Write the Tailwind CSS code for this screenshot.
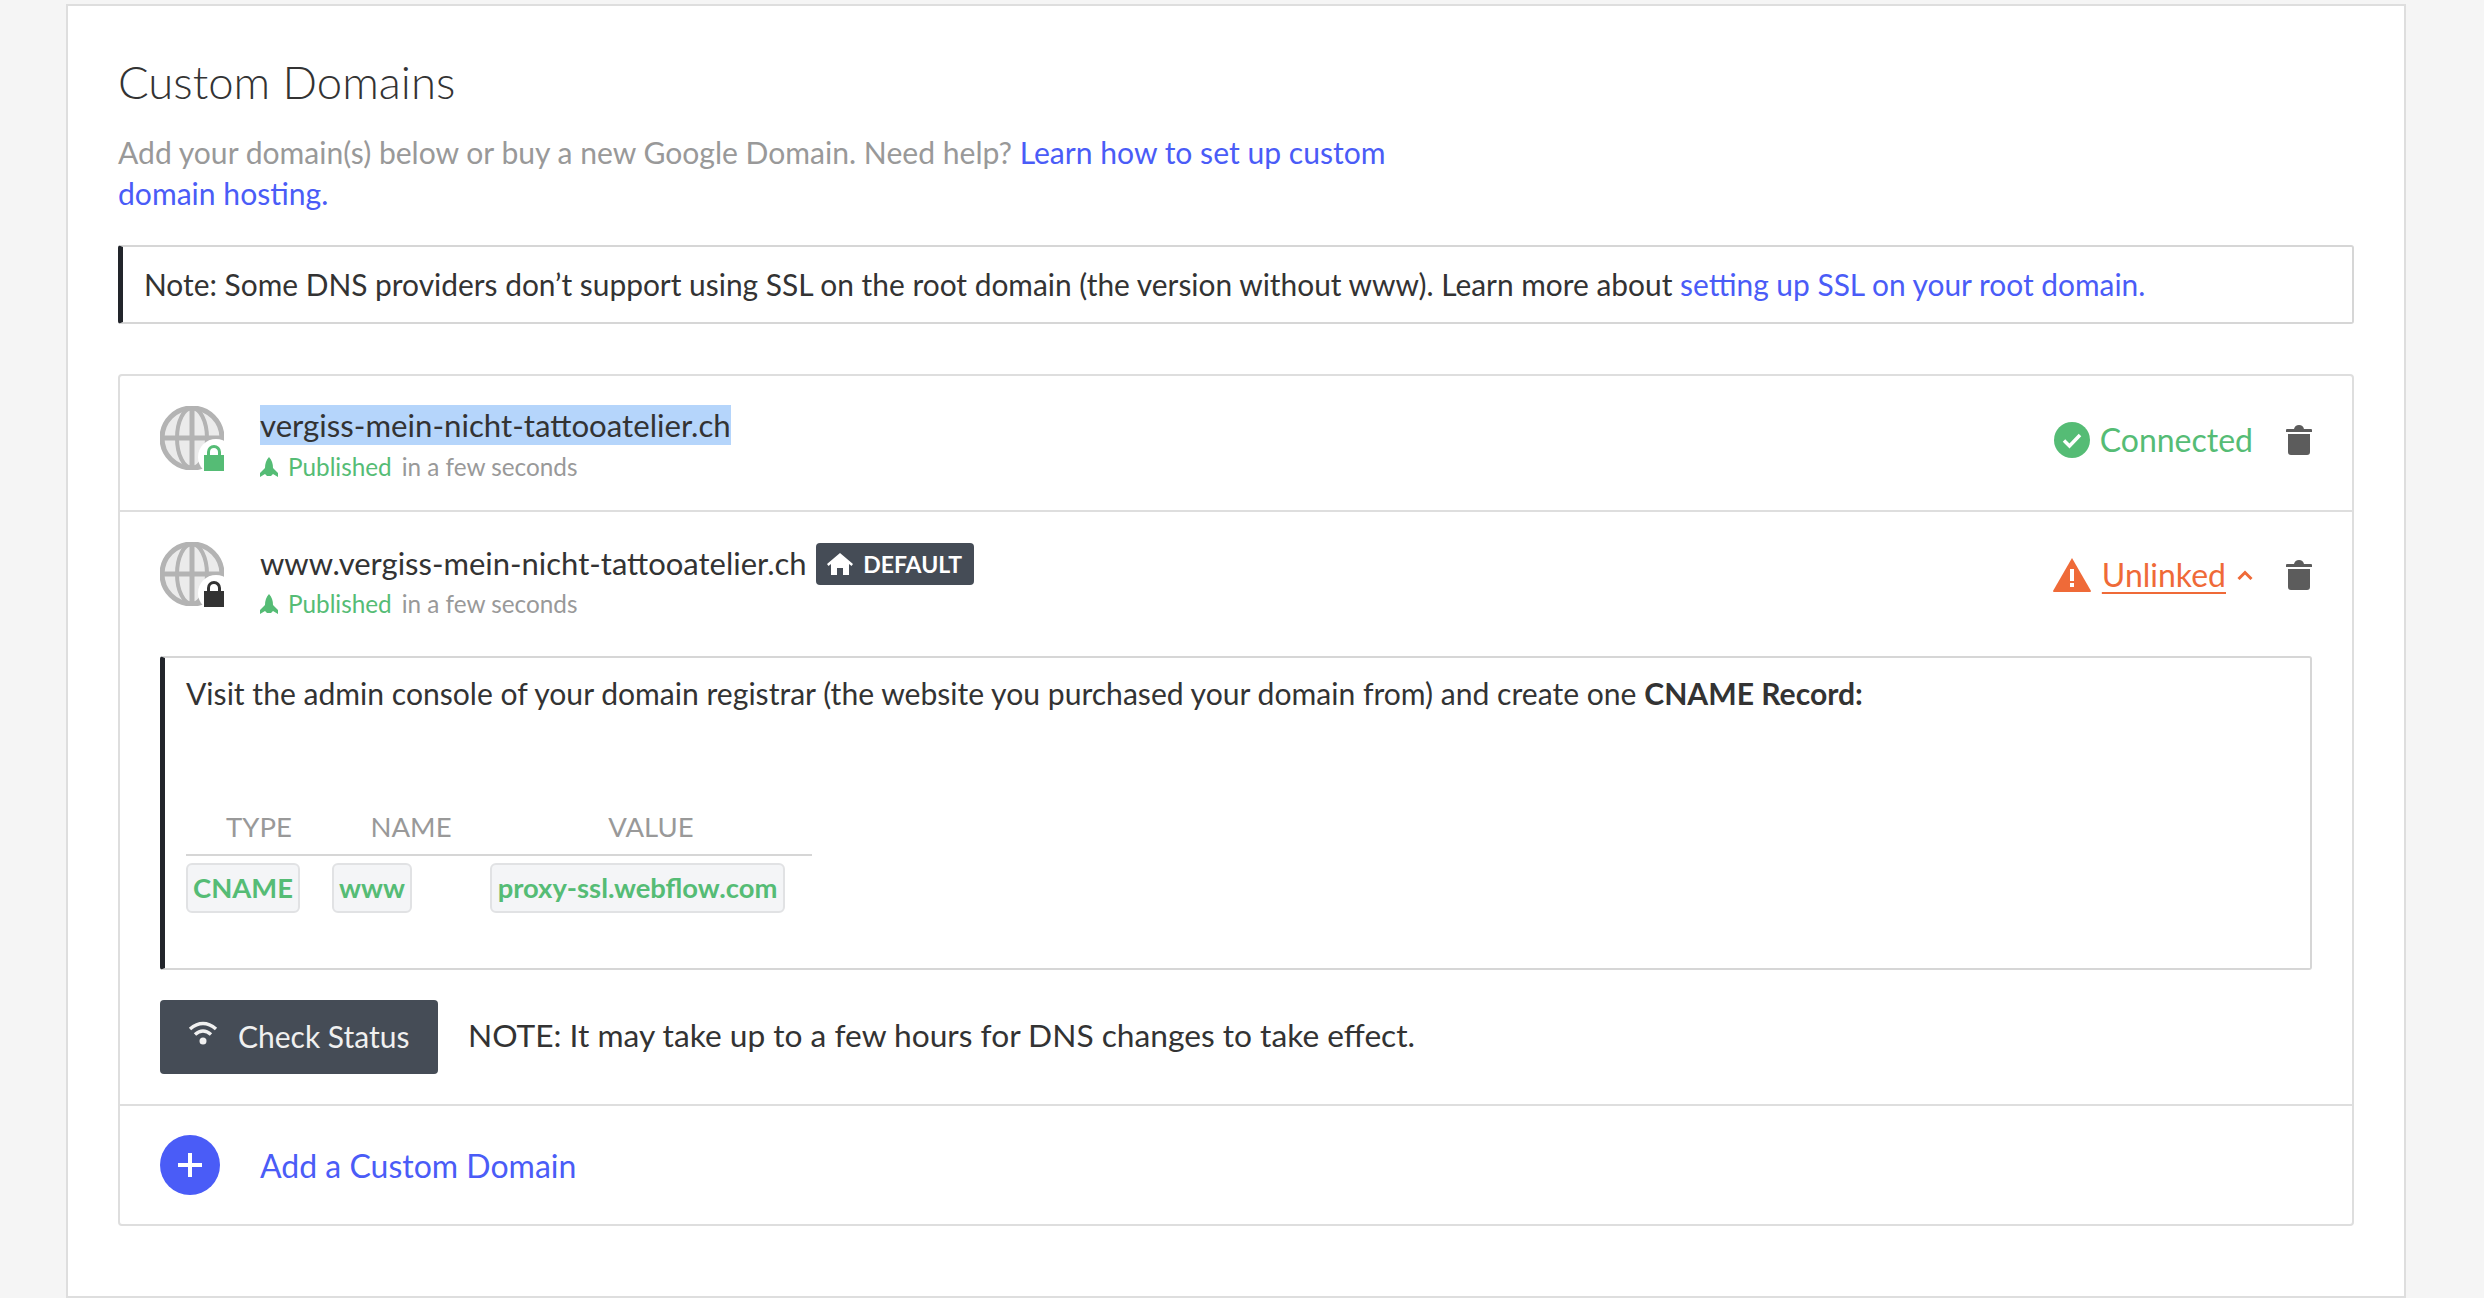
<!DOCTYPE html>
<html lang="en">
<head>
<meta charset="UTF-8" />
<title>Custom Domains</title>
<script src="https://cdn.jsdelivr.net/npm/@tailwindcss/browser@4"></script>
</head>
<body class="bg-[#f5f5f5] font-['Lato',sans-serif] text-[#333] overflow-hidden">
<div class="h-[1298px] pt-[4px]">
  <div class="ml-[66px] w-[2340px] h-[1294px] bg-white border-2 border-[#dedede] px-[50px]">
    <!-- heading -->
    <h1 class="pt-[48px] text-[45.5px] leading-[56px] font-light text-[#333]">Custom Domains</h1>
    <p class="mt-[22px] w-[1340px] text-[30.1px] leading-[41px] text-[#999]">Add your domain(s) below or buy a new Google Domain. Need help? <a class="text-[#4a5cf7]">Learn how to set up custom domain hosting.</a></p>

    <!-- ssl note -->
    <div class="mt-[31px] h-[79px] flex items-center border-2 border-l-[5px] border-[#d6d6d6] border-l-[#22252b] rounded-[3px] pl-[21px] text-[29.9px]">
      <span>Note: Some DNS providers don’t support using SSL on the root domain (the version without www). Learn more about <a class="text-[#4a5cf7]">setting up SSL on your root domain.</a></span>
    </div>

    <!-- domain list -->
    <div class="mt-[50px] border-2 border-[#dedede] rounded-[4px]">
      <!-- apex domain -->
      <div class="h-[136px] flex items-start px-[40px] border-b-2 border-[#dedede]">
        <div class="relative mt-[30px] w-[64px] h-[64px]">
          <svg viewBox="0 0 64 64" class="w-[64px] h-[64px]"><circle cx="32" cy="32" r="30" fill="#ebebeb" stroke="#b3b3b3" stroke-width="5"/><ellipse cx="32" cy="32" rx="15" ry="30" fill="none" stroke="#b3b3b3" stroke-width="4"/><path d="M32 2v60M2 32h60" stroke="#b3b3b3" stroke-width="5"/></svg>
          <div class="absolute left-[38px] top-[33px] w-[36px] h-[36px] rounded-full bg-white"></div>
          <svg viewBox="0 0 20 26" class="absolute left-[44px] top-[39px] w-[20px] h-[26px]"><path d="M0 10h20v16H0z" fill="#55bc75"/><path d="M4.500 12V7a5.500 5.500 0 0 1 11 0v5" fill="none" stroke="#55bc75" stroke-width="3"/></svg>
        </div>
        <div class="ml-[36px] pt-[29px]">
          <div class="text-[31.2px] leading-[40px]"><span class="inline-block bg-[#b5d5fb]">vergiss-mein-nicht-tattooatelier.ch</span></div>
          <div class="mt-[3px] flex items-center text-[24.3px] leading-[38px]">
            <svg viewBox="0 0 18 20" class="w-[18px] h-[20px] mr-[10px]"><path d="M9 0c3 3 4 7 4 11l5 5v4l-5-3-2 2H7l-2-2-5 3v-4l5-5C5 7 6 3 9 0z" fill="#55bc75"/></svg>
            <span class="text-[#55bc75]">Published</span><span class="ml-[10px] text-[#999]">in a few seconds</span>
          </div>
        </div>
        <div class="ml-auto mt-[46px] flex items-center">
          <svg viewBox="0 0 36 36" class="w-[36px] h-[36px]"><circle cx="18" cy="18" r="18" fill="#55bc75"/><path d="M10 18.500l5.500 5.500L26 13" fill="none" stroke="#fff" stroke-width="3.500"/></svg>
          <span class="ml-[10px] text-[32px] leading-[36px] text-[#55bc75]">Connected</span>
          <svg viewBox="0 0 26 30" class="ml-[33px] w-[26px] h-[30px]"><path d="M2 9h22v18a3 3 0 0 1-3 3H5a3 3 0 0 1-3-3zM0 7V5q0-1 1-1h7q1-4 5-4t5 4h7q1 0 1 1v2z" fill="#5c5c5c"/></svg>
        </div>
      </div>

      <!-- www domain -->
      <div class="px-[40px] border-b-2 border-[#dedede] pb-[30px]">
        <div class="h-[144px] flex items-start">
          <div class="relative mt-[30px] w-[64px] h-[64px]">
            <svg viewBox="0 0 64 64" class="w-[64px] h-[64px]"><circle cx="32" cy="32" r="30" fill="#ebebeb" stroke="#b3b3b3" stroke-width="5"/><ellipse cx="32" cy="32" rx="15" ry="30" fill="none" stroke="#b3b3b3" stroke-width="4"/><path d="M32 2v60M2 32h60" stroke="#b3b3b3" stroke-width="5"/></svg>
            <div class="absolute left-[38px] top-[33px] w-[36px] h-[36px] rounded-full bg-white"></div>
            <svg viewBox="0 0 20 26" class="absolute left-[44px] top-[39px] w-[20px] h-[26px]"><path d="M0 10h20v16H0z" fill="#333"/><path d="M4.500 12V7a5.500 5.500 0 0 1 11 0v5" fill="none" stroke="#333" stroke-width="3"/></svg>
          </div>
          <div class="ml-[36px] pt-[28px]">
            <div class="flex items-center text-[31px] leading-[40px]">
              <span>www.vergiss-mein-nicht-tattooatelier.ch</span>
              <span class="ml-[9px] mt-[3px] h-[42px] w-[158px] flex items-center justify-center rounded-[4px] bg-[#454c56] text-white text-[23px] font-bold">
                <svg viewBox="0 0 26 22" class="w-[26px] h-[22px] mr-[10px]"><path d="M13 0l13 11-1.500 2-2.500-2v11h-6v-7h-6v7H4V11l-2.500 2L0 11z" fill="#fff"/></svg>DEFAULT</span>
            </div>
            <div class="flex items-center text-[24.3px] leading-[38px]">
              <svg viewBox="0 0 18 20" class="w-[18px] h-[20px] mr-[10px]"><path d="M9 0c3 3 4 7 4 11l5 5v4l-5-3-2 2H7l-2-2-5 3v-4l5-5C5 7 6 3 9 0z" fill="#55bc75"/></svg>
              <span class="text-[#55bc75]">Published</span><span class="ml-[10px] text-[#999]">in a few seconds</span>
            </div>
          </div>
          <div class="ml-auto mt-[45px] flex items-center">
            <svg viewBox="0 0 38 34" class="w-[38px] h-[34px]"><path d="M19 0l19 33q0 1-1 1H1q-1 0-1-1z" fill="#ef6a38"/><path d="M17 11h4v12h-4zM17 25h4v4h-4z" fill="#fff"/></svg>
            <span class="ml-[11px] text-[32px] leading-[36px] text-[#ef6a38] underline underline-offset-[5px] decoration-2">Unlinked</span>
            <svg viewBox="0 0 16 10" class="ml-[11px] w-[16px] h-[10px]"><path d="M1.500 9L8 2.500 14.500 9" fill="none" stroke="#ef6a38" stroke-width="3"/></svg>
            <svg viewBox="0 0 26 30" class="ml-[33px] w-[26px] h-[30px]"><path d="M2 9h22v18a3 3 0 0 1-3 3H5a3 3 0 0 1-3-3zM0 7V5q0-1 1-1h7q1-4 5-4t5 4h7q1 0 1 1v2z" fill="#5c5c5c"/></svg>
          </div>
        </div>

        <!-- cname instructions -->
        <div class="h-[314px] border-2 border-l-[5px] border-[#d6d6d6] border-l-[#22252b] rounded-[3px] pl-[21px] pt-[15px]">
          <p class="text-[30.1px] leading-[40px]">Visit the admin console of your domain registrar (the website you purchased your domain from) and create one <b>CNAME Record:</b></p>
          <div class="mt-[93px] w-[626px] grid grid-cols-[146px_158px_322px] border-b-2 border-[#d6d6d6] h-[50px] text-[27.5px] text-[#999] text-center">
            <span>TYPE</span><span>NAME</span><span>VALUE</span>
          </div>
          <div class="mt-[7px] flex items-center text-[27.4px] font-bold text-[#55bc75]">
            <span class="w-[114px] h-[50px] flex items-center justify-center bg-[#f4f5f7] border-2 border-[#e1e2e4] rounded-[6px]">CNAME</span>
            <span class="ml-[32px] w-[80px] h-[50px] flex items-center justify-center bg-[#f4f5f7] border-2 border-[#e1e2e4] rounded-[6px]">www</span>
            <span class="ml-[78px] w-[295px] h-[50px] flex items-center justify-center bg-[#f4f5f7] border-2 border-[#e1e2e4] rounded-[6px]">proxy-ssl.webflow.com</span>
          </div>
        </div>

        <div class="mt-[30px] flex items-center">
          <button class="w-[278px] h-[74px] flex items-center rounded-[4px] bg-[#454c56] text-[#f0f0f0] text-[30px] pl-[28px] pb-[2px]">
            <svg viewBox="0 0 30 26" class="w-[30px] h-[26px] mr-[20px] -mt-[6px]"><path d="M2 9q13-11 26 0M7 14.500q8-7 16 0" fill="none" stroke="#f0f0f0" stroke-width="3.500"/><circle cx="15" cy="21" r="3.500" fill="#f0f0f0"/></svg>
            Check Status
          </button>
          <span class="ml-[30px] pb-[2px] text-[31.7px]">NOTE: It may take up to a few hours for DNS changes to take effect.</span>
        </div>
      </div>

      <!-- add domain -->
      <div class="h-[118px] flex items-center px-[40px]">
        <svg viewBox="0 0 60 60" class="w-[60px] h-[60px]"><circle cx="30" cy="30" r="30" fill="#4a5cf7"/><path d="M30 18v24M18 30h24" stroke="#fff" stroke-width="4"/></svg>
        <a class="ml-[40px] pt-[2px] text-[32px] text-[#4a5cf7]">Add a Custom Domain</a>
      </div>
    </div>
  </div>
</div>
</body>
</html>
